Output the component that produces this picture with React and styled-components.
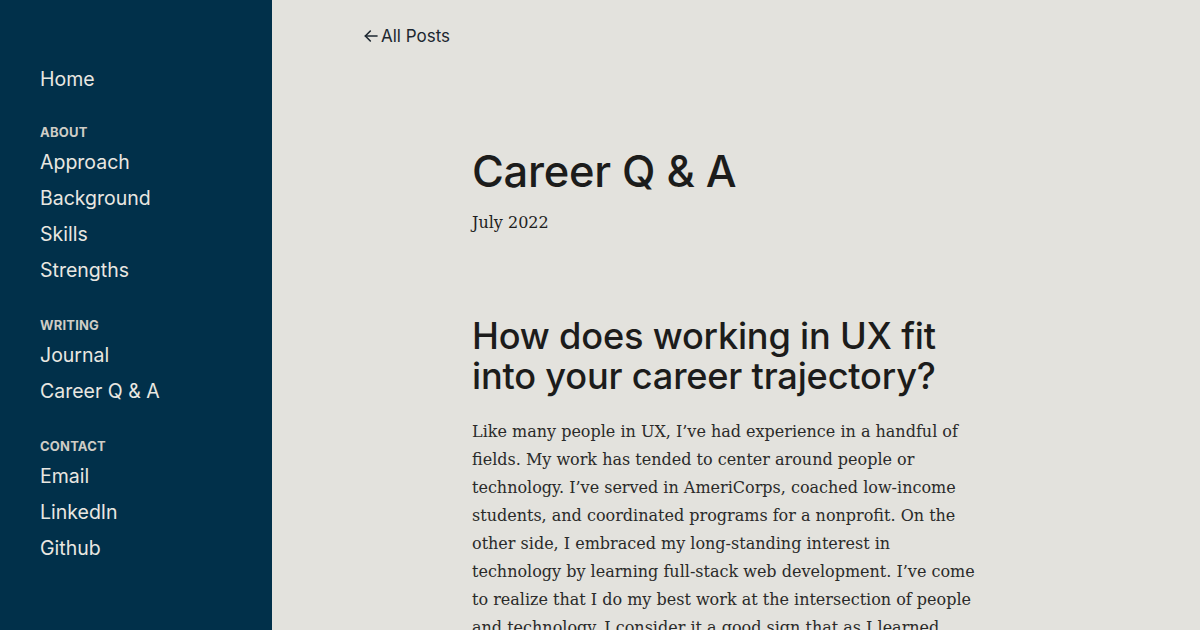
import React from "react";
import styled, { createGlobalStyle } from "styled-components";

const GlobalStyle = createGlobalStyle`
  html, body {
    margin: 0;
    padding: 0;
    background: #e3e2dd;
  }
  * { box-sizing: border-box; }
`;

const Layout = styled.div`
  display: flex;
  width: 1200px;
  height: 630px;
  overflow: hidden;
`;

const Sidebar = styled.nav`
  width: 272px;
  flex-shrink: 0;
  background: #01304a;
  padding: 61px 40px 0;
  font-family: "Inter", "Liberation Sans", sans-serif;
`;

const Section = styled.div`
  display: flex;
  flex-direction: column;
  margin-bottom: ${props => props.gap || 30}px;
`;

const SectionLabel = styled.div`
  font-size: 13px;
  font-weight: 700;
  letter-spacing: 0.2px;
  text-transform: uppercase;
  color: #cfcdc6;
  line-height: 16px;
  margin-bottom: 4px;
`;

const NavLink = styled.a`
  font-size: 19.5px;
  color: #e9e7e1;
  line-height: 36px;
  text-decoration: none;
`;

const Main = styled.main`
  flex: 1;
  display: flex;
  flex-direction: column;
  align-items: center;
  padding-top: 26px;
`;

const TopBar = styled.div`
  width: 746px;
`;

const BackLink = styled.a`
  display: inline-flex;
  align-items: center;
  gap: 2px;
  font-family: "Inter", "Liberation Sans", sans-serif;
  font-size: 17px;
  color: #1c2730;
  text-decoration: none;
`;

const Article = styled.article`
  width: 528px;
  padding-top: 95px;
  color: #1c1c1b;
`;

const Title = styled.h1`
  margin: 0;
  font-family: "Inter", "Liberation Sans", sans-serif;
  font-weight: 500;
  font-size: 43.5px;
  line-height: 56px;
  letter-spacing: -0.3px;
`;

const Date = styled.div`
  margin-top: 14px;
  font-family: "DejaVu Serif", serif;
  font-size: 16px;
  color: #1e1e1e;
`;

const Question = styled.h2`
  max-width: 516px;
  margin: 84px 0 22px;
  font-family: "Inter", "Liberation Sans", sans-serif;
  font-weight: 500;
  font-size: 36.2px;
  line-height: 40px;
  letter-spacing: -0.2px;
`;

const Paragraph = styled.p`
  max-width: 510px;
  margin: 0;
  font-family: "DejaVu Serif", serif;
  font-size: 16px;
  line-height: 28px;
  color: #2a2a29;
`;

const Arrow = () => (
  <svg width="16" height="16" viewBox="0 0 24 24" fill="none" stroke="currentColor" strokeWidth="2.4" strokeLinecap="round" strokeLinejoin="round">
    <path d="M21 12H3.5" />
    <path d="M11 4.5 3.5 12l7.5 7.5" />
  </svg>
);

const sections = [
  { label: null, links: ["Home"], gap: 27 },
  { label: "About", links: ["Approach", "Background", "Skills", "Strengths"], gap: 29 },
  { label: "Writing", links: ["Journal", "Career Q & A"], gap: 29 },
  { label: "Contact", links: ["Email", "LinkedIn", "Github"], gap: 0 },
];

export default function App() {
  return (
    <>
      <GlobalStyle />
      <Layout>
        <Sidebar>
          {sections.map((s, i) => (
            <Section key={i} gap={s.gap}>
              {s.label && <SectionLabel>{s.label}</SectionLabel>}
              {s.links.map(l => (
                <NavLink key={l} href="#">{l}</NavLink>
              ))}
            </Section>
          ))}
        </Sidebar>
        <Main>
          <TopBar>
            <BackLink href="#"><Arrow />All Posts</BackLink>
          </TopBar>
          <Article>
            <Title>Career Q &amp; A</Title>
            <Date>July 2022</Date>
            <Question>How does working in UX fit into your career trajectory?</Question>
            <Paragraph>
              Like many people in UX, I’ve had experience in a handful of fields. My work has tended to center around people or technology. I’ve served in AmeriCorps, coached low-income students, and coordinated programs for a nonprofit. On the other side, I embraced my long-standing interest in technology by learning full-stack web development. I’ve come to realize that I do my best work at the intersection of people and technology. I consider it a good sign that as I learned more about UX, the more I wanted to learn.
            </Paragraph>
          </Article>
        </Main>
      </Layout>
    </>
  );
}
